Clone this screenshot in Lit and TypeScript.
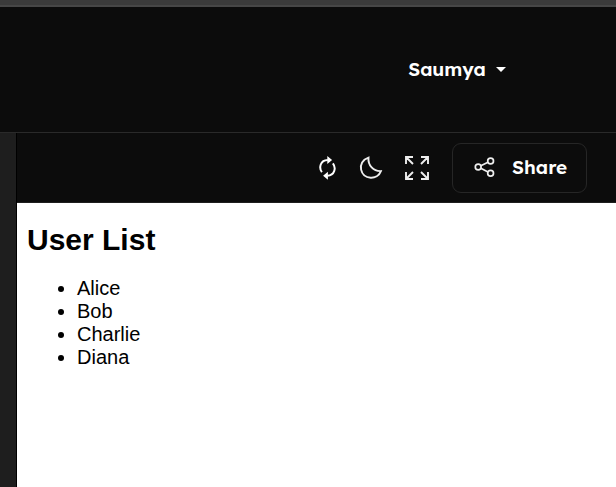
import {LitElement, html, css} from "lit";
import {customElement} from "lit/decorators.js";

const refreshIcon = html`<svg class="refresh" width="18" height="24" viewBox="0 0 18 24">
  <path d="M2.9 16.2C-.3 11.8 1.1 4.2 8.8 4M13.9 7.3C17.4 12 15.6 19.5 8.4 19.8"/>
  <path class="solid" d="M8.3 0L13.1 4L8.3 8ZM8.9 15.8L4.1 19.8L8.9 23.8Z"/>
</svg>`;

const moonIcon = html`<svg width="24" height="24" viewBox="0 0 24 24">
  <path d="M9.5 1.6C3.4 3.6 1.1 8.7 2.1 13.6C4.4 23.9 18.6 24.4 21.9 15.1C14.5 15.4 8.8 9.5 9.5 1.6Z"/>
</svg>`;

const expandIcon = html`<svg width="24" height="24" viewBox="0 0 24 24">
  <path d="M8 1H1V8M1 1L8 8M16 1H23V8M23 1L16 8M1 16V23H8M1 23L8 16M23 16V23H16M23 23L16 16"/>
</svg>`;

const shareIcon = html`<svg width="22" height="22" viewBox="0 0 22 22">
  <circle cx="4.2" cy="11" r="2.9"/><circle cx="16.6" cy="5" r="2.9"/><circle cx="16.6" cy="17.3" r="2.9"/>
  <path d="M6.8 9.7L14 6.2M6.8 12.3L14 16"/>
</svg>`;

const users = ["Alice", "Bob", "Charlie", "Diana"];

@customElement("app-root")
export class AppRoot extends LitElement {
  static styles = css`
    :host{display:flex;flex-direction:column;height:487px;background:#0c0c0c;font-family:Lexend,Lato,sans-serif;color:#fff;overflow:hidden}
    *{box-sizing:border-box}
    .strip{height:7px;flex:none;background:#3b3b3b;border-bottom:2px solid #474747}
    .header{height:126px;flex:none;border-bottom:1px solid #2a2a2a;display:flex;align-items:center;justify-content:flex-end;padding:0 110px 2px 0}
    .user{display:flex;align-items:center;gap:10px;font-size:19px;font-weight:600}
    .caret{border:5px solid transparent;border-top-color:#fff;border-bottom:0;margin-top:2px}
    .body{flex:1;display:flex;min-height:0}
    .gutter{width:17px;flex:none;background:#1e1e1e;border-right:1px solid #000}
    .main{flex:1;display:flex;flex-direction:column}
    .tools{height:70px;flex:none;display:flex;align-items:center;justify-content:flex-end;padding-right:29px;border-bottom:1px solid #1e1e1e}
    .actions{display:flex;align-items:center;gap:22px;margin-right:23px}
    svg{display:block;flex:none;fill:none;stroke:#eee;stroke-width:1.9}
    .refresh{stroke:#fff;stroke-width:2}
    .solid{fill:#fff;stroke:none}
    .share{width:135px;height:50px;border:1px solid #262626;border-radius:9px;display:flex;align-items:center;gap:16px;padding:0 0 1px 21px;font-weight:600;font-size:19px}
    .share svg{stroke-width:1.7}
    .page{flex:1;background:#fff;color:#000;padding:17px 10px;font:20px "Liberation Sans",Arial,sans-serif}
    h1{font-size:30px;line-height:40px;margin:0 0 17px}
    ul{margin:0;padding-left:50px;line-height:23px}
  `;

  render() {
    return html`
      <div class="strip"></div>
      <div class="header"><div class="user"><span>Saumya</span><span class="caret"></span></div></div>
      <div class="body">
        <div class="gutter"></div>
        <div class="main">
          <div class="tools">
            <div class="actions">${refreshIcon}${moonIcon}${expandIcon}</div>
            <div class="share">${shareIcon}<span>Share</span></div>
          </div>
          <div class="page"><h1>User List</h1><ul>${users.map(n => html`<li>${n}</li>`)}</ul></div>
        </div>
      </div>`;
  }
}
